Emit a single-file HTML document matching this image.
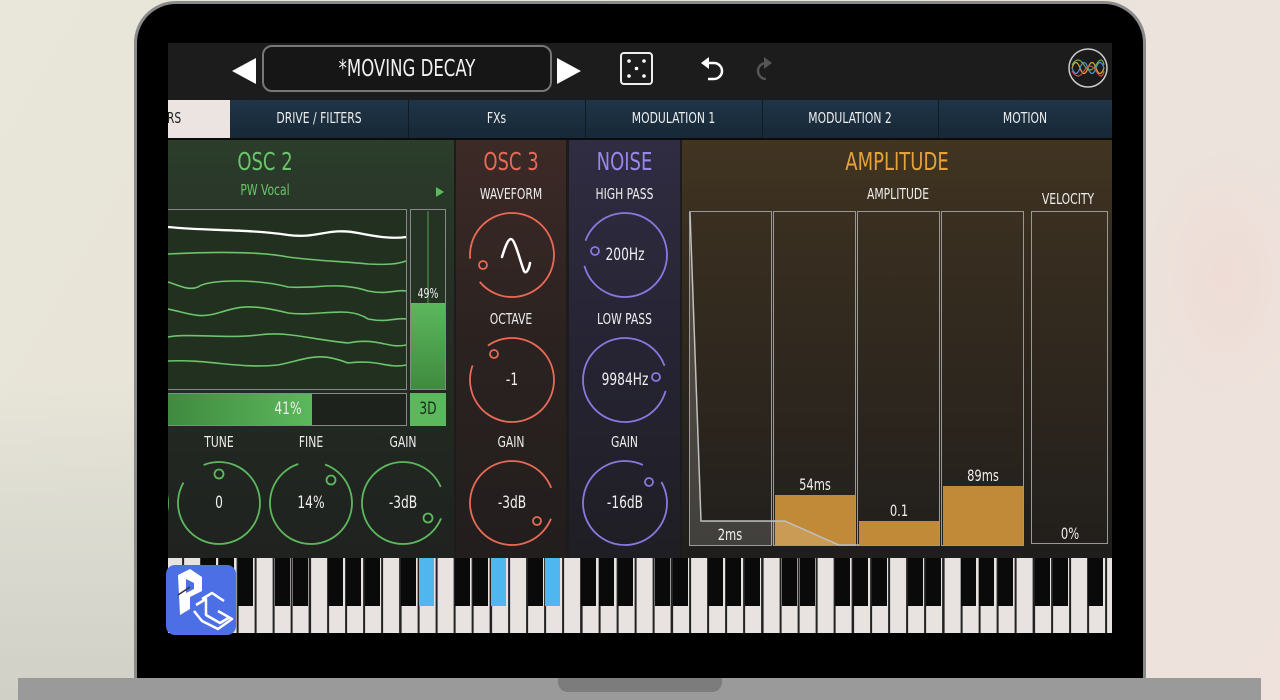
<!DOCTYPE html>
<html><head><meta charset="utf-8"><style>
*{margin:0;padding:0;box-sizing:border-box}
body{width:1280px;height:700px;overflow:hidden;position:relative;font-family:"DejaVu Sans Condensed","Liberation Sans",sans-serif;
background:linear-gradient(120deg,#e9e6da 0%,#e6e3d6 40%,#ebe3dc 70%,#efe2dc 100%)}
.a{position:absolute}
.t{color:#eee;font-size:15px;text-align:center;position:absolute;transform:scaleX(.8);transform-origin:center;white-space:nowrap}
.s{top:1px}
</style></head><body>
<div class="a" style="left:0;top:380px;width:140px;height:320px;background:linear-gradient(180deg,rgba(220,220,210,0),#d8d8ce 60%,#d0d0c6)"></div>
<div class="a" style="left:1145px;top:150px;width:135px;height:260px;background:radial-gradient(ellipse at 60% 50%,#efdcd6,rgba(239,226,220,0) 70%)"></div>
<div class="a" style="left:134px;top:1px;width:1012px;height:690px;border-radius:42px 42px 0 0;background:#000;border:3px solid #8a8a8a;border-bottom:none"></div>
<div class="a" style="left:18px;top:678px;width:1243px;height:22px;background:#9a9a9a"></div>
<div class="a" style="left:558px;top:678px;width:164px;height:14px;background:#7c7c7c;border-radius:0 0 10px 10px"></div>
<div class="a" style="left:168px;top:43px;width:944px;height:590px;background:#1c1c1c;overflow:hidden">
 <div class="a" style="left:94px;top:2px;width:290px;height:47px;border:2px solid #777;border-radius:10px;background:#161616"></div>
 <div class="t" style="left:94px;top:13px;width:290px;font-size:23px;color:#f2f2f2">*MOVING DECAY</div>
 <svg class="a" style="left:0;top:0" width="944" height="57">
  <polygon points="64,28 88,15 88,41" fill="#fff"/>
  <polygon points="413,28 389,15 389,41" fill="#fff"/>
  <rect x="453" y="10" width="31" height="31" rx="3" fill="none" stroke="#eee" stroke-width="2"/>
  <circle cx="461" cy="18" r="1.8" fill="#fff"/><circle cx="476" cy="18" r="1.8" fill="#fff"/><circle cx="468.5" cy="25.5" r="1.8" fill="#fff"/><circle cx="461" cy="33" r="1.8" fill="#fff"/><circle cx="476" cy="33" r="1.8" fill="#fff"/>
  <path d="M540 20 L546 20 A8 8 0 0 1 546 36 L540 36" fill="none" stroke="#fff" stroke-width="2.5"/>
  <polygon points="533,20 541,14 541,26" fill="#fff"/>
  <path d="M598 20 A8 8 0 0 0 598 36" fill="none" stroke="#555" stroke-width="2.5"/>
  <polygon points="604,20 596,14 596,26" fill="#555"/>
  <circle cx="920" cy="25" r="19" fill="#1a1a1a" stroke="#ccc" stroke-width="1.5"/>
  <path d="M904 25 Q908 14 912 25 T920 25 T928 25 T936 25" fill="none" stroke="#e0a030" stroke-width="1.3"/>
  <path d="M904 25 Q908 36 912 25 T920 25 T928 25 T936 25" fill="none" stroke="#4a90d0" stroke-width="1.3"/>
  <path d="M904 22 Q910 12 916 22 T928 22 T936 22" fill="none" stroke="#70b050" stroke-width="1.2"/>
  <path d="M904 28 Q910 38 916 28 T928 28 T936 28" fill="none" stroke="#d05050" stroke-width="1.2"/>
 </svg>
 <div class="a" style="left:0;top:57px;width:944px;height:38px;background:linear-gradient(#1f3548,#172836)"></div>
 <div class="a" style="left:0;top:57px;width:62px;height:38px;background:#ebe4e1"></div>
 <div class="a" style="left:240px;top:57px;width:1px;height:38px;background:#0e1a24"></div>
 <div class="a" style="left:417px;top:57px;width:1px;height:38px;background:#0e1a24"></div>
 <div class="a" style="left:594px;top:57px;width:1px;height:38px;background:#0e1a24"></div>
 <div class="a" style="left:770px;top:57px;width:1px;height:38px;background:#0e1a24"></div>
 <div class="t" style="left:-4px;top:66px;width:20px;color:#222">RS</div>
 <div class="t" style="left:62px;top:66px;width:178px">DRIVE / FILTERS</div>
 <div class="t" style="left:240px;top:66px;width:177px">FXs</div>
 <div class="t" style="left:417px;top:66px;width:177px">MODULATION 1</div>
 <div class="t" style="left:594px;top:66px;width:176px">MODULATION 2</div>
 <div class="t" style="left:770px;top:66px;width:174px">MOTION</div>
 <div class="a" style="left:0;top:95px;width:944px;height:2px;background:#0c0c0c"></div>
 <div class="a" style="left:0;top:97px;width:286px;height:418px;background:linear-gradient(#2b3d2b,#252d25 40%,#1f221f)"></div>
 <div class="a" style="left:288px;top:97px;width:110px;height:418px;background:linear-gradient(#3d2a27,#2a2220 50%,#221e1d)"></div>
 <div class="a" style="left:401px;top:97px;width:111px;height:418px;background:linear-gradient(#302c42,#262433 50%,#1f1e24)"></div>
 <div class="a" style="left:514px;top:97px;width:430px;height:418px;background:linear-gradient(#413421,#2c261e 55%,#201e1c)"></div>
 <div class="t" style="left:40px;top:104px;width:114px;font-size:25px;color:#6cc46c">OSC 2</div>
 <div class="t" style="left:62px;top:138px;width:70px;font-size:15px;color:#6cc46c">PW Vocal</div>
 <svg class="a" style="left:266px;top:143px" width="12" height="12"><polygon points="2,1 10,6 2,11" fill="#5cb85c"/></svg>
 <div class="t" style="left:288px;top:104px;width:110px;font-size:25px;color:#e86a55">OSC 3</div>
 <div class="t" style="left:401px;top:104px;width:111px;font-size:25px;color:#9a86e8">NOISE</div>
 <div class="t" style="left:514px;top:104px;width:430px;font-size:25px;color:#e6a23a">AMPLITUDE</div>
 <div class="t" style="left:288px;top:142px;width:110px">WAVEFORM</div>
 <div class="t" style="left:401px;top:142px;width:111px">HIGH PASS</div>
 <div class="t" style="left:288px;top:267px;width:110px">OCTAVE</div>
 <div class="t" style="left:401px;top:267px;width:111px">LOW PASS</div>
 <div class="t" style="left:288px;top:390px;width:110px">GAIN</div>
 <div class="t" style="left:401px;top:390px;width:111px">GAIN</div>
 <div class="t" style="left:21px;top:390px;width:60px">TUNE</div>
 <div class="t" style="left:113px;top:390px;width:60px">FINE</div>
 <div class="t" style="left:205px;top:390px;width:60px">GAIN</div>
 <div class="t" style="left:680px;top:142px;width:100px">AMPLITUDE</div>
 <div class="t" style="left:860px;top:147px;width:80px">VELOCITY</div>
 <div class="a" style="left:-2px;top:166px;width:241px;height:181px;border:1.5px solid #888;background:#22301f"></div>
 <svg class="a" style="left:0;top:166px" width="240" height="180" fill="none" stroke-width="1.6">
  <path d="M0 18 C40 22 80 20 120 26 C150 30 160 18 190 24 C210 28 225 30 238 28" stroke="#fff" stroke-width="2.3"/>
  <path d="M0 45 C40 43 90 42 120 48 C150 52 170 52 200 55 C220 56 230 55 238 52" stroke="#6cc46c"/>
  <path d="M0 73 C10 76 20 82 30 78 C40 70 90 70 120 78 C150 80 170 72 200 82 C220 86 230 80 238 82" stroke="#6cc46c"/>
  <path d="M0 100 C20 104 30 110 50 104 C70 98 80 94 120 104 C150 108 180 96 200 110 C220 114 230 108 238 110" stroke="#6cc46c"/>
  <path d="M0 128 C20 124 60 130 90 126 C120 122 140 130 180 134 C210 128 220 140 238 136" stroke="#6cc46c"/>
  <path d="M0 152 C40 150 70 160 110 156 C140 150 150 142 180 154 C210 150 220 160 238 156" stroke="#6cc46c"/>
 </svg>
 <div class="a" style="left:242px;top:166px;width:36px;height:181px;border:1.5px solid #888;background:#253325"></div>
 <div class="a" style="left:259px;top:168px;width:2px;height:92px;background:#3d6a3d"></div>
 <div class="a" style="left:243px;top:260px;width:34px;height:86px;background:linear-gradient(#5cb85c,#3f8a3f)"></div>
 <div class="t" style="left:242px;top:244px;width:36px;font-size:13px">49%</div>
 <div class="a" style="left:-2px;top:350px;width:241px;height:33px;border:1.5px solid #888;background:#1d221d"></div>
 <div class="a" style="left:0;top:351px;width:144px;height:31px;background:linear-gradient(90deg,#3f8a3f,#5cb85c)"></div>
 <div class="t" style="left:100px;top:356px;width:40px;font-size:17px">41%</div>
 <div class="a" style="left:242px;top:350px;width:36px;height:33px;background:#5cb85c"></div>
 <div class="t" style="left:242px;top:356px;width:36px;font-size:17px;color:#1a2a1a">3D</div>
 <svg class="a" style="left:0;top:0" width="944" height="515" fill="none">
  <g stroke="#5cb85c" stroke-width="1.8">
   <circle cx="51" cy="460" r="41" stroke-dasharray="230 28" transform="rotate(-112 51 460)"/>
   <circle cx="51" cy="431" r="4.5"/>
   <circle cx="143" cy="460" r="41" stroke-dasharray="230 28" transform="rotate(-70 143 460)"/>
   <circle cx="163" cy="437" r="4.5"/>
   <circle cx="235" cy="460" r="41" stroke-dasharray="225 33" transform="rotate(22 235 460)"/>
   <circle cx="260" cy="475" r="4.5"/>
   <circle cx="-41" cy="460" r="41"/>
  </g>
  <g stroke="#e86a55" stroke-width="1.8">
   <circle cx="344" cy="212" r="42" stroke-dasharray="238 26" transform="rotate(175 344 212)"/>
   <circle cx="315" cy="222" r="4"/>
   <circle cx="344" cy="337" r="42" stroke-dasharray="238 26" transform="rotate(-125 344 337)"/>
   <circle cx="326" cy="311" r="4"/>
   <circle cx="344" cy="460" r="42" stroke-dasharray="232 32" transform="rotate(22 344 460)"/>
   <circle cx="369" cy="478" r="4"/>
  </g>
  <g stroke="#8a78e0" stroke-width="1.8">
   <circle cx="457" cy="212" r="42" stroke-dasharray="238 26" transform="rotate(200 457 212)"/>
   <circle cx="427" cy="208" r="4"/>
   <circle cx="457" cy="337" r="42" stroke-dasharray="238 26" transform="rotate(15 457 337)"/>
   <circle cx="488" cy="334" r="4"/>
   <circle cx="457" cy="460" r="42" stroke-dasharray="238 26" transform="rotate(-30 457 460)"/>
   <circle cx="481" cy="439" r="4"/>
  </g>
  <path d="M334 214 C337 204 340 196 343 196 C347 196 352 218 356 228 C358 232 361 226 362 220" stroke="#fff" stroke-width="2.5" stroke-linecap="round"/>
 </svg>
 <div class="t" style="left:31px;top:450px;width:40px;font-size:17px">0</div>
 <div class="t" style="left:123px;top:450px;width:40px;font-size:17px">14%</div>
 <div class="t" style="left:210px;top:450px;width:50px;font-size:17px">-3dB</div>
 <div class="t" style="left:319px;top:450px;width:50px;font-size:17px">-3dB</div>
 <div class="t" style="left:427px;top:450px;width:60px;font-size:17px">-16dB</div>
 <div class="t" style="left:427px;top:202px;width:60px;font-size:17px">200Hz</div>
 <div class="t" style="left:324px;top:327px;width:40px;font-size:17px">-1</div>
 <div class="t" style="left:422px;top:327px;width:70px;font-size:17px">9984Hz</div>
 <div class="a" style="left:521px;top:168px;width:83px;height:335px;border:1.5px solid #999;background:linear-gradient(#3a2f20,#221f1c)"></div>
 <div class="a" style="left:605px;top:168px;width:83px;height:335px;border:1.5px solid #999;background:linear-gradient(#3a2f20,#221f1c)"></div>
 <div class="a" style="left:689px;top:168px;width:83px;height:335px;border:1.5px solid #999;background:linear-gradient(#3a2f20,#221f1c)"></div>
 <div class="a" style="left:773px;top:168px;width:83px;height:335px;border:1.5px solid #999;background:linear-gradient(#3a2f20,#221f1c)"></div>
 <div class="a" style="left:863px;top:168px;width:77px;height:333px;border:1.5px solid #999;background:linear-gradient(#3a2f20,#221f1c)"></div>
 <div class="a" style="left:606.5px;top:452px;width:80px;height:49.5px;background:#c08a38"></div>
 <div class="a" style="left:690.5px;top:478px;width:80px;height:23.5px;background:#c08a38"></div>
 <div class="a" style="left:774.5px;top:443px;width:80px;height:58.5px;background:#c08a38"></div>
 <svg class="a" style="left:521px;top:168px" width="170" height="335" fill="none">
  <path d="M1 1 L12 310 L96 310 L150 334 L170 334" stroke="#bbb" stroke-width="1.5"/>
  <path d="M1 1 L12 310 L96 310 L150 334 L1 334 Z" fill="rgba(255,255,255,0.15)" stroke="none"/>
 </svg>
 <div class="t" style="left:540px;top:482px;width:44px;font-size:16px">2ms</div>
 <div class="t" style="left:625px;top:432px;width:44px;font-size:16px">54ms</div>
 <div class="t" style="left:709px;top:458px;width:44px;font-size:16px">0.1</div>
 <div class="t" style="left:793px;top:423px;width:44px;font-size:16px">89ms</div>
 <div class="t" style="left:880px;top:481px;width:44px;font-size:16px">0%</div>
 <div class="a" style="left:0;top:515px;width:944px;height:75px;background:repeating-linear-gradient(90deg,#e8e2e0 0,#e8e2e0 16px,#222 16px,#222 18.1px);background-position:-1.9px 0"></div>
</div>
<svg class="a" style="left:168px;top:558px" width="944" height="50">
 <g fill="#0a0a0a">
  <rect x="33" y="0" width="15" height="48"/><rect x="51" y="0" width="15" height="48"/><rect x="70" y="0" width="15" height="48"/>
  <rect x="107" y="0" width="15" height="48"/><rect x="125" y="0" width="15" height="48"/><rect x="160" y="0" width="15" height="48"/><rect x="178" y="0" width="15" height="48"/><rect x="197" y="0" width="15" height="48"/>
  <rect x="233" y="0" width="15" height="48"/><rect x="287" y="0" width="15" height="48"/><rect x="305" y="0" width="15" height="48"/>
  <rect x="360" y="0" width="15" height="48"/><rect x="413" y="0" width="15" height="48"/><rect x="431" y="0" width="15" height="48"/><rect x="450" y="0" width="15" height="48"/>
  <rect x="487" y="0" width="15" height="48"/><rect x="505" y="0" width="15" height="48"/><rect x="540" y="0" width="15" height="48"/><rect x="558" y="0" width="15" height="48"/><rect x="577" y="0" width="15" height="48"/>
  <rect x="614" y="0" width="15" height="48"/><rect x="632" y="0" width="15" height="48"/><rect x="667" y="0" width="15" height="48"/><rect x="685" y="0" width="15" height="48"/><rect x="704" y="0" width="15" height="48"/>
  <rect x="740" y="0" width="15" height="48"/><rect x="758" y="0" width="15" height="48"/><rect x="793" y="0" width="15" height="48"/><rect x="811" y="0" width="15" height="48"/><rect x="830" y="0" width="15" height="48"/>
  <rect x="867" y="0" width="15" height="48"/><rect x="885" y="0" width="15" height="48"/><rect x="920" y="0" width="15" height="48"/>
 </g>
 <g fill="#4fb6ee">
  <rect x="251" y="0" width="15" height="48"/><rect x="323" y="0" width="15" height="48"/><rect x="377" y="0" width="15" height="48"/>
 </g>
</svg>
<div class="a" style="left:166px;top:565px;width:70px;height:70px;background:#4c6fe6;border-radius:9px;overflow:hidden">
 <svg width="70" height="70" fill="none" stroke="#fff" stroke-width="2.5" stroke-linejoin="round">
  <path d="M12 10 L24 4 L36 12 L36 26 L24 32 L24 44 L14 50 L12 10 Z" fill="#fff" stroke="none"/>
  <path d="M20 14 L28 18 L28 24 L20 28 Z" fill="#4c6fe6" stroke="none"/>
  <path d="M12 30 L24 22" stroke="#333" stroke-width="1.5"/>
  <path d="M36 34 L46 28 L58 36 M30 40 L40 34 L40 50 L54 58 L64 52 M52 46 L66 54 L52 64 L36 56 L28 46"/>
 </svg>
</div>
</body></html>
